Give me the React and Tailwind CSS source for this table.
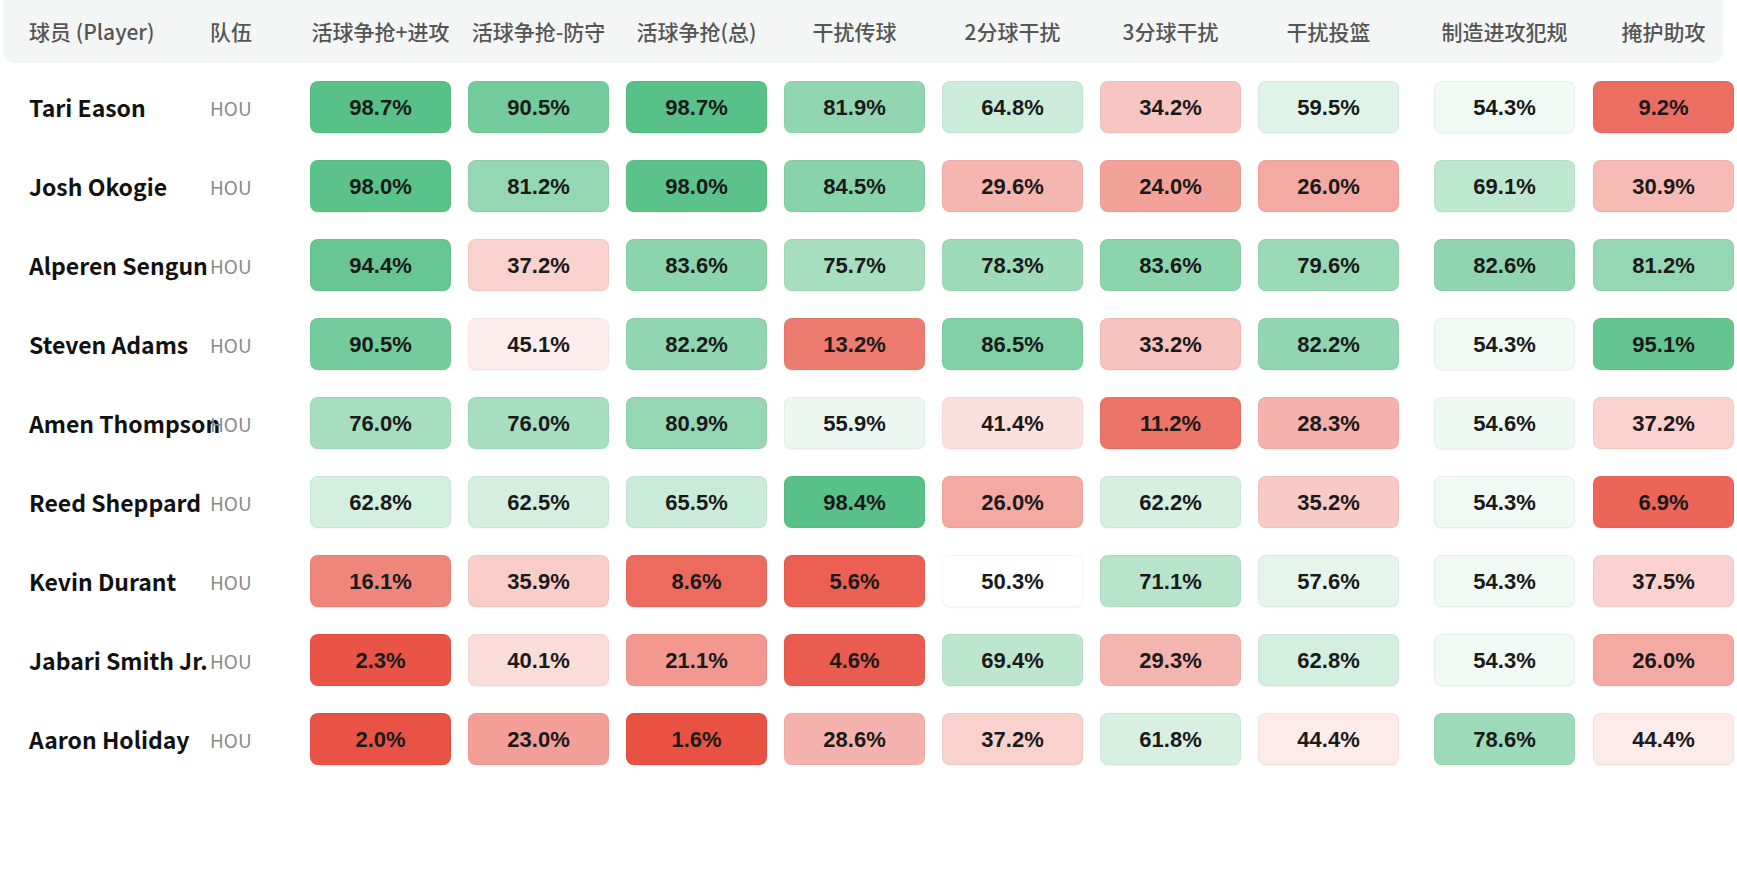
const columns = [
  { label: "活球争抢+进攻", gap: "" },
  { label: "活球争抢-防守", gap: "ml-[17px]" },
  { label: "活球争抢(总)", gap: "ml-[17px]" },
  { label: "干扰传球", gap: "ml-[17px]" },
  { label: "2分球干扰", gap: "ml-[17px]" },
  { label: "3分球干扰", gap: "ml-[17px]" },
  { label: "干扰投篮", gap: "ml-[17px]" },
  { label: "制造进攻犯规", gap: "ml-[35px]" },
  { label: "掩护助攻", gap: "ml-[18px]" },
];

const players = [
  { name: "Tari Eason", team: "HOU", values: [98.7, 90.5, 98.7, 81.9, 64.8, 34.2, 59.5, 54.3, 9.2] },
  { name: "Josh Okogie", team: "HOU", values: [98.0, 81.2, 98.0, 84.5, 29.6, 24.0, 26.0, 69.1, 30.9] },
  { name: "Alperen Sengun", team: "HOU", values: [94.4, 37.2, 83.6, 75.7, 78.3, 83.6, 79.6, 82.6, 81.2] },
  { name: "Steven Adams", team: "HOU", values: [90.5, 45.1, 82.2, 13.2, 86.5, 33.2, 82.2, 54.3, 95.1] },
  { name: "Amen Thompson", team: "HOU", values: [76.0, 76.0, 80.9, 55.9, 41.4, 11.2, 28.3, 54.6, 37.2] },
  { name: "Reed Sheppard", team: "HOU", values: [62.8, 62.5, 65.5, 98.4, 26.0, 62.2, 35.2, 54.3, 6.9] },
  { name: "Kevin Durant", team: "HOU", values: [16.1, 35.9, 8.6, 5.6, 50.3, 71.1, 57.6, 54.3, 37.5] },
  { name: "Jabari Smith Jr.", team: "HOU", values: [2.3, 40.1, 21.1, 4.6, 69.4, 29.3, 62.8, 54.3, 26.0] },
  { name: "Aaron Holiday", team: "HOU", values: [2.0, 23.0, 1.6, 28.6, 37.2, 61.8, 44.4, 78.6, 44.4] },
];

// white at 50, green toward 100, red toward 0
const heatColor = (v) => {
  const green = [84, 191, 132];
  const red = [232, 76, 61];
  const end = v >= 50 ? green : red;
  const t = Math.min(Math.abs(v - 50) / 50, 1);
  const mix = end.map((c) => Math.round(255 - (255 - c) * t));
  return `rgb(${mix[0]}, ${mix[1]}, ${mix[2]})`;
};

const cjk = "font-['Noto_Sans_CJK_SC','Noto_Sans',sans-serif]";

export default function App() {
  return (
    <div className="min-h-[884px] w-full overflow-hidden bg-white pl-[3px]">
      <div className={`w-[1720px] h-[63px] rounded-b-xl bg-[#f4f6f5] flex items-center pl-[26px] text-[21px] font-medium text-[#555] ${cjk}`}>
        <div className="w-[181px] shrink-0 whitespace-nowrap">球员 (Player)</div>
        <div className="w-[100px] shrink-0">队伍</div>
        {columns.map((col, i) => (
          <div key={i} className={`w-[141px] shrink-0 text-center whitespace-nowrap ${col.gap}`}>
            {col.label}
          </div>
        ))}
      </div>

      <div className="mt-[18px] flex flex-col gap-[27px] pl-[26px]">
        {players.map((p, r) => (
          <div key={r} className="flex items-center h-[52px]">
            <div className={`w-[181px] shrink-0 whitespace-nowrap text-[23px] font-bold text-[#111] ${cjk}`}>
              {p.name}
            </div>
            <div className={`w-[100px] shrink-0 pt-[3px] text-[19px] text-[#8a8a8a] ${cjk}`}>{p.team}</div>
            {p.values.map((v, i) => (
              <div
                key={i}
                className={`w-[141px] h-[52px] shrink-0 rounded-lg border border-black/[0.04] shadow-[0_1px_2px_rgba(0,0,0,0.05)] flex items-center justify-center text-[22px] font-bold text-[#1a1a1a] font-['Liberation_Sans',Arial,sans-serif] ${columns[i].gap}`}
                style={{ backgroundColor: heatColor(v) }}
              >
                {v.toFixed(1)}%
              </div>
            ))}
          </div>
        ))}
      </div>
    </div>
  );
}
